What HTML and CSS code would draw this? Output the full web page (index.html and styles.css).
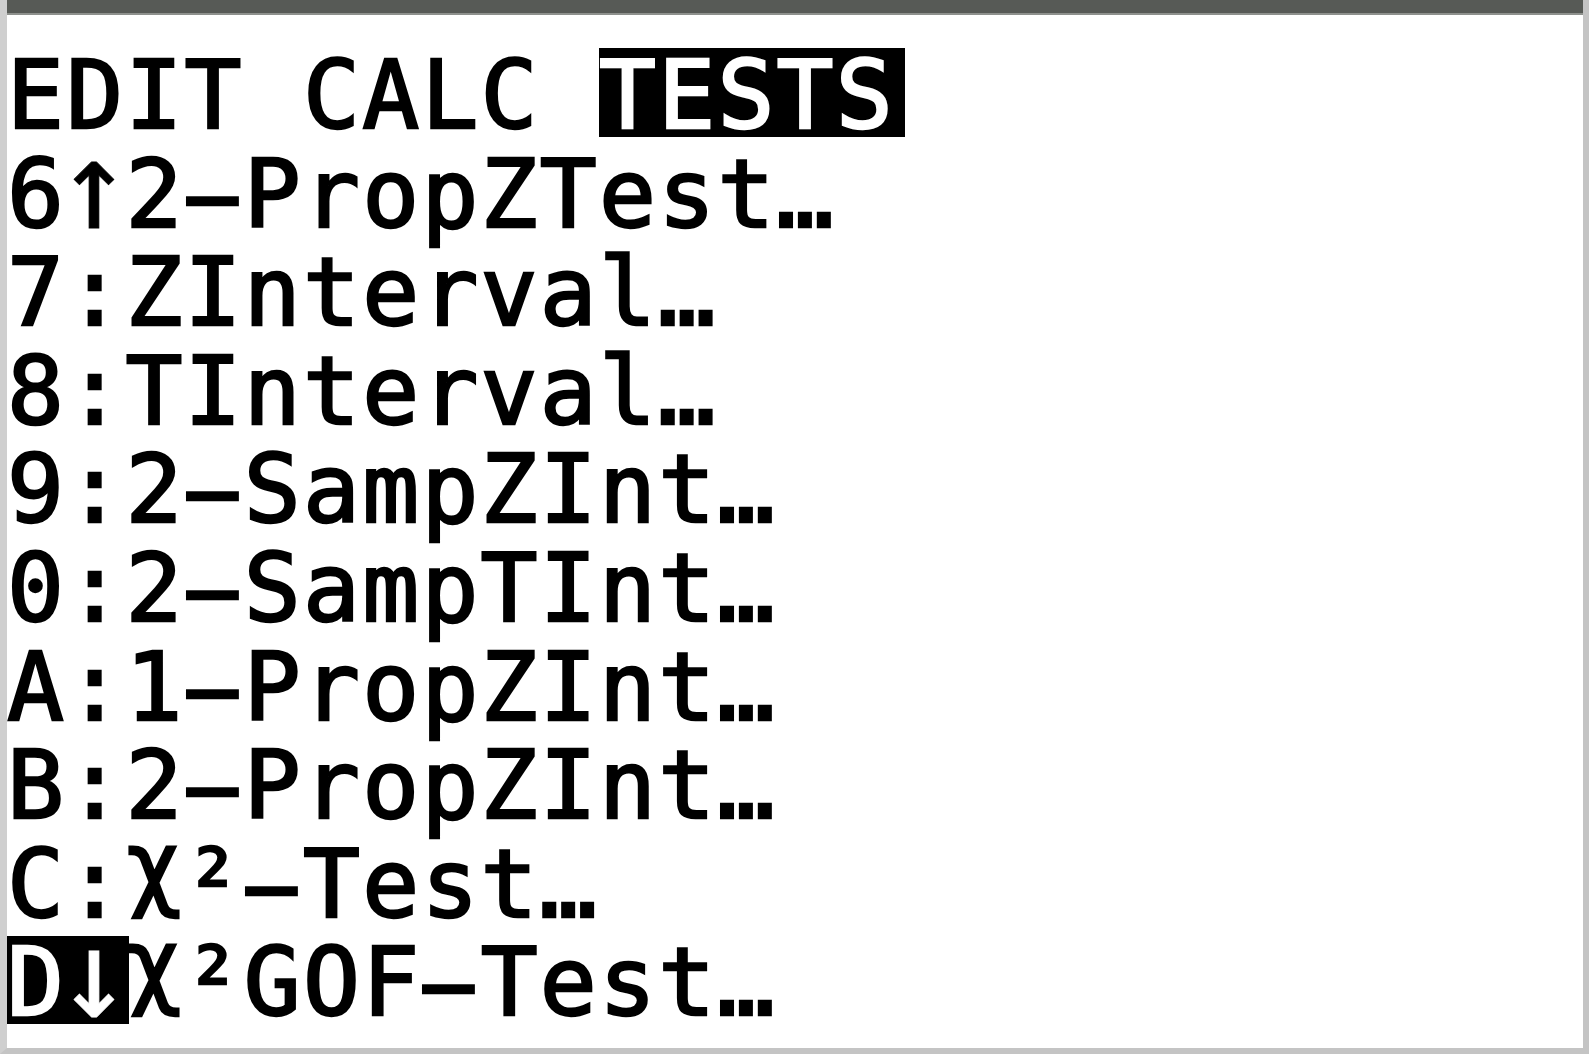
FILE: index.html
```html
<!DOCTYPE html>
<html>
<head>
<meta charset="utf-8">
<link rel="stylesheet" href="styles.css">
</head>
<body>
<div class="frame">
  <div class="statusbar"></div>
  <div class="screen">
    <div class="row"><span>EDIT CALC </span><span class="hl hl-tests">TESTS</span></div>
    <div class="row">6<span class="arrow">↑</span>2<span class="dash">-</span>PropZTest…</div>
    <div class="row">7:ZInterval…</div>
    <div class="row">8:TInterval…</div>
    <div class="row">9:2<span class="dash">-</span>SampZInt…</div>
    <div class="row">0:2<span class="dash">-</span>SampTInt…</div>
    <div class="row">A:1<span class="dash">-</span>PropZInt…</div>
    <div class="row">B:2<span class="dash">-</span>PropZInt…</div>
    <div class="row">C:<span class="chi">χ</span>²<span class="dash">-</span>Test…</div>
    <div class="row"><span class="hl hl-d">D<span class="arrow">↓</span></span><span class="chi">χ</span>²GOF<span class="dash">-</span>Test…</div>
  </div>
</div>
</body>
</html>
```
FILE: styles.css
```css
html, body {
  margin: 0;
  padding: 0;
  background: #ffffff;
}
.frame {
  width: 1589px;
  height: 1054px;
  box-sizing: border-box;
  display: flex;
  flex-direction: column;
  border-left: 7px solid #cfcfcf;
  border-right: 6px solid #c4c4c4;
  border-bottom: 6px solid #c4c4c4;
  background: #ffffff;
  overflow: hidden;
}
.statusbar {
  height: 13px;
  flex: none;
  background: #575a56;
  border-bottom: 2px solid #8e918d;
  margin-left: -7px;
  margin-right: -6px;
}
.screen {
  padding-top: 31px;
  font-family: "DejaVu Sans Mono", monospace;
  font-weight: normal;
  -webkit-text-stroke: 2.4px;
  font-size: 94.6px;
  letter-spacing: 2.25px;
  line-height: 98.6px;
  color: #000000;
}
.row {
  height: 98.6px;
  white-space: pre;
}
.dash {
  display: inline-block;
  transform: scaleX(2);
}
.arrow {
  display: inline-block;
  -webkit-text-stroke: 0.6px;
  transform: scale(1.3, 1.3);
  transform-origin: 50% 80%;
}
.chi {
  display: inline-block;
  transform: translateY(-19px);
}
.hl {
  display: inline-block;
  background: #000000;
  color: #ffffff;
  line-height: 84px;
  padding-top: 4.7px;
}
.hl-tests {
  box-shadow: 10px 0 0 #000000;
}
.hl-d {
  box-shadow: 4px 0 0 #000000;
}
```
